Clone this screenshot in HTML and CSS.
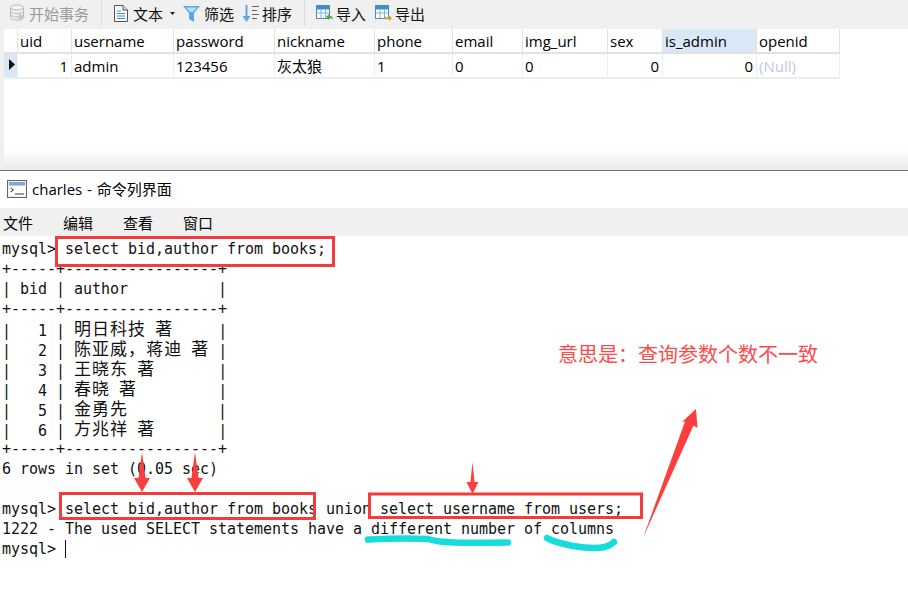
FILE: index.html
```html
<!DOCTYPE html>
<html lang="zh-CN">
<head>
<meta charset="utf-8">
<title>charles - 命令列界面</title>
<link rel="stylesheet" href="styles.css">
</head>
<body>
<div class="page">
  <section class="navicat">
    <div class="toolbar">
      <button class="tool tool-begin is-disabled">
        <svg class="ico" width="16" height="18" viewBox="0 0 16 18"><ellipse cx="7" cy="3.500" rx="6.500" ry="2.500" fill="#f4f4f4" stroke="#b9b9b9"/><path d="M.5 3.500v10c0 1.400 3 2.500 6.500 2.500s6.500-1.100 6.500-2.500v-10M.5 7c0 1.400 3 2.500 6.500 2.500S13.500 8.400 13.500 7M.5 10.500c0 1.400 3 2.500 6.500 2.500s6.500-1.100 6.500-2.500" fill="none" stroke="#b9b9b9"/><path d="M9 9l6 4-6 4z" fill="#b7d3b0"/></svg>
        <span>开始事务</span>
      </button>
      <i class="sep sep-a"></i>
      <button class="tool tool-text">
        <svg class="ico" width="14" height="17" viewBox="0 0 14 17"><path d="M.5.500h8.500l4.500 4.500v11.500H.500z" fill="#fff" stroke="#555"/><path d="M9 .500v4.500h4.500" fill="#ddd" stroke="#555"/><path d="M3 6h4M3 8.500h8M3 11h8M3 13.500h8" stroke="#2f8fdc" stroke-width="1.200"/></svg>
        <span>文本</span>
        <svg class="caret" width="5" height="3" viewBox="0 0 5 3"><path d="M0 0h5L2.500 3z" fill="#222"/></svg>
      </button>
      <button class="tool tool-filter">
        <svg class="ico" width="17" height="17" viewBox="0 0 17 17"><path d="M0 1h17l-6 7v9l-5-3V8z" fill="#5aa9e6"/><path d="M3 2.500h11L10 7H7z" fill="#bcdcf5"/></svg>
        <span>筛选</span>
      </button>
      <button class="tool tool-sort">
        <svg class="ico" width="17" height="17" viewBox="0 0 17 17"><path d="M3.500 0h2v11h3L4.500 17 .500 11h3z" fill="#5aa9e6"/><path d="M10 1.500h7M10 5.500h5M10 9.500h7M10 13.500h5" stroke="#666" stroke-width="1.200"/></svg>
        <span>排序</span>
      </button>
      <i class="sep sep-b"></i>
      <button class="tool tool-import">
        <svg class="ico" width="17" height="17" viewBox="0 0 17 17"><rect x=".5" y=".5" width="13" height="13" fill="#fff" stroke="#3f8fcf"/><path d="M.5 1h13v3.500H.500z" fill="#3f8fcf"/><path d="M5 4v9M9.500 4v9M1 8h12" stroke="#7fb5e0"/><path d="M10 12l3-3v2h1c2 0 3 1.500 3 4-1-1.500-1.500-2-3-2h-1v2z" fill="#58a63c"/></svg>
        <span>导入</span>
      </button>
      <button class="tool tool-export">
        <svg class="ico" width="17" height="17" viewBox="0 0 17 17"><rect x=".5" y=".5" width="13" height="13" fill="#fff" stroke="#3f8fcf"/><path d="M.5 1h13v3.500H.500z" fill="#3f8fcf"/><path d="M5 4v9M9.500 4v9M1 8h12" stroke="#7fb5e0"/><path d="M17 13l-3 3.500v-2h-1c-2 0-3-1.500-3-4 1 1.500 1.500 2 3 2h1v-2z" fill="#f09a1a"/></svg>
        <span>导出</span>
      </button>
    </div>
    <div class="data">
      <div class="grid">
        <div class="cell head corner"></div>
        <div class="cell head">uid</div>
        <div class="cell head">username</div>
        <div class="cell head">password</div>
        <div class="cell head">nickname</div>
        <div class="cell head">phone</div>
        <div class="cell head">email</div>
        <div class="cell head">img_url</div>
        <div class="cell head">sex</div>
        <div class="cell head selected">is_admin</div>
        <div class="cell head">openid</div>
        <div class="cell marker"><svg width="6" height="11" viewBox="0 0 6 11"><path d="M0 0l6 5.500L0 11z" fill="#111"/></svg></div>
        <div class="cell num">1</div>
        <div class="cell">admin</div>
        <div class="cell">123456</div>
        <div class="cell">灰太狼</div>
        <div class="cell">1</div>
        <div class="cell">0</div>
        <div class="cell">0</div>
        <div class="cell num">0</div>
        <div class="cell num">0</div>
        <div class="cell null">(Null)</div>
      </div>
    </div>
  </section>

  <section class="console">
    <header class="titlebar">
      <svg width="20" height="18" viewBox="0 0 20 18"><rect x=".5" y=".5" width="19" height="17" fill="#eee" stroke="#666"/><rect x="2" y="2" width="16" height="3.500" fill="#7fa8d8"/><rect x="2" y="6" width="16" height="10" fill="#fff"/><path d="M3.500 8l3 2-3 2M8 14h5" fill="none" stroke="#333"/><path d="M13 14h4" stroke="#333"/></svg>
      <span>charles - 命令列界面</span>
    </header>
    <nav class="menubar">
      <span>文件</span><span>编辑</span><span>查看</span><span>窗口</span>
    </nav>
    <div class="terminal">
      <div class="line">mysql&gt; select bid,author from books;</div>
      <div class="line">+-----+-----------------+</div>
      <div class="line">| bid | author          |</div>
      <div class="line">+-----+-----------------+</div>
      <div class="line">|   1 | <span class="cjk">明日科技</span> <span class="cjk">著</span>     |</div>
      <div class="line">|   2 | <span class="cjk">陈亚威，蒋迪</span> <span class="cjk">著</span> |</div>
      <div class="line">|   3 | <span class="cjk">王晓东</span> <span class="cjk">著</span>       |</div>
      <div class="line">|   4 | <span class="cjk">春晓</span> <span class="cjk">著</span>         |</div>
      <div class="line">|   5 | <span class="cjk">金勇先</span>          |</div>
      <div class="line">|   6 | <span class="cjk">方兆祥</span> <span class="cjk">著</span>       |</div>
      <div class="line">+-----+-----------------+</div>
      <div class="line">6 rows in set (0.05 sec)</div>
      <div class="line"></div>
      <div class="line">mysql&gt; select bid,author from books union select username from users;</div>
      <div class="line">1222 - The used SELECT statements have a different number of columns</div>
      <div class="line">mysql&gt; <i class="cursor"></i></div>
    </div>
  </section>

  <svg class="marks" width="908" height="590" viewBox="0 0 908 590">
    <g class="boxes">
      <rect x="56.500" y="237.500" width="277" height="28"/>
      <rect x="60.500" y="493.500" width="254" height="25"/>
      <rect x="369.500" y="494" width="272" height="23.500"/>
    </g>
    <g class="arrows">
      <path d="M142 452l3.500 26h4.500l-8 14-8-14h4.500z"/>
      <path d="M195 452l3.500 26h4.500l-8 14-8-14h4.500z"/>
      <path d="M472.500 462l2 20h4l-6 12-6-12h4z"/>
      <path d="M643 538l42-116.500-3 .5 14-13 1.500 19-4-2.500z"/>
    </g>
    <g class="strokes">
      <path d="M368 539.500c20-1 45-1.500 60-.5 12 4 30 4 80 3.500"/>
      <path d="M547 538c6 4 16 6 26 8 12 2 24 2.500 32 1 4-1 7-3 9-5"/>
    </g>
  </svg>
  <p class="note">意思是：查询参数个数不一致</p>
</div>
</body>
</html>
```

FILE: styles.css
```css
* { box-sizing: border-box; }
html, body { margin: 0; padding: 0; background: #fff; }
body { font-family: "Open Sans", "Noto Sans CJK SC", sans-serif; color: #000; overflow: hidden; }
.page { position: relative; width: 908px; height: 590px; overflow: hidden; }

.navicat { height: 171px; display: flex; flex-direction: column; border-bottom: 1px solid #6e6e6e; }
.toolbar { height: 29px; background: #f0f0f0; display: flex; align-items: center; padding: 0 0 3px 10px; font-size: 15px; }
.tool { display: flex; align-items: center; gap: 3px; padding: 0; border: 0; background: none; font: inherit; color: #111; }
.tool.is-disabled { color: #9a9a9a; }
.tool-filter { gap: 4px; }
.tool-text { gap: 5px; }
.caret { margin-left: 2px; }
.sep { width: 1px; height: 26px; background: #dcdcdc; margin-bottom: -2px; }
.sep-a { margin: 0 12px 0 12px; }
.sep-b { margin: 0 11px 0 12px; }
.tool-filter { margin-left: 8px; }
.tool-sort { margin-left: 8px; }
.tool-export { margin-left: 9px; }

.data { flex: 1; padding-left: 4px; background: linear-gradient(#fff 0, #fff 121px, #ececec 140px); position: relative; }
.data::before { content: ""; position: absolute; left: 0; top: 0; bottom: 0; width: 4px; background: #f0f0f0; }
.grid { display: grid; grid-template-columns: 14px 54px 102px 101px 100px 78px 70px 85px 55px 94px 83px; grid-template-rows: 25px 25px; width: 836px; background: #fff; font-size: 15px; }
.cell { padding: 0 2px; line-height: 24px; border-right: 1px solid #eee; border-bottom: 2px solid #eee; white-space: nowrap; }
.head { border-right: 1px solid #e2e2e2; border-bottom: 2px solid #e2e2e2; }
.selected { background: #d8e8f6; }
.marker { background: #d8e8f6; display: flex; align-items: center; padding: 0 0 2px 5px; }
.num { text-align: right; padding-right: 3px; }
.null { color: #c3c8dc; }

.console { display: flex; flex-direction: column; }
.titlebar { height: 37px; display: flex; align-items: center; gap: 5px; padding: 0 0 2px 7px; font-size: 15px; word-spacing: 1px; background: #fff; }
.menubar { height: 28px; background: #f0f0f0; display: flex; align-items: center; padding-left: 3px; gap: 30px; font-size: 15px; }
.terminal { padding: 3px 0 0 2px; font-family: "DejaVu Sans Mono", "Noto Sans CJK SC", monospace; font-size: 15px; letter-spacing: -.03px; color: #111; }
.line { height: 20px; line-height: 20px; white-space: pre; }
.cjk { display: inline-block; height: 20px; font-family: "Noto Sans CJK SC", sans-serif; font-size: 17px; letter-spacing: 1.03px; line-height: 20px; transform: translateY(-1px); }
.cursor { display: inline-block; width: 1px; height: 18px; background: #111; vertical-align: -4px; }

.marks { position: absolute; left: 0; top: 0; pointer-events: none; }
.boxes rect { fill: none; stroke: #f43b3b; stroke-width: 3; }
.arrows path { fill: #fb3e3e; }
.strokes path { fill: none; stroke: #17dcdc; stroke-width: 6.500; stroke-linecap: round; stroke-linejoin: round; }
.note { position: absolute; left: 558px; top: 341px; margin: 0; font-size: 20px; line-height: 28px; color: #fb4a4a; white-space: nowrap; }
```
